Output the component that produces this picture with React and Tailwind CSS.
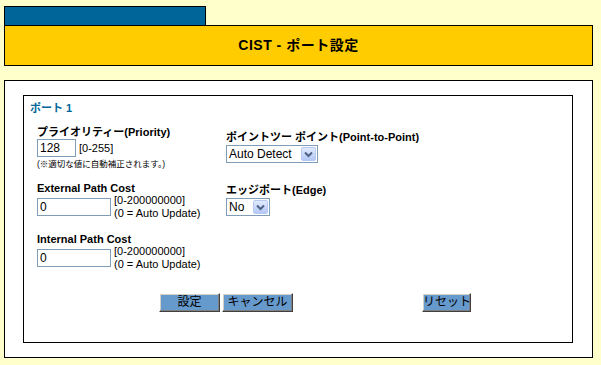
import React from "react";

const font = "font-['Liberation_Sans','Noto_Sans_CJK_JP',sans-serif]";

const TextBox = ({ value, width }) => (
  <div
    className={`h-[18px] border border-[#7f9db9] bg-white px-[2px] text-[12px] leading-[16px] text-black ${width}`}
  >
    {value}
  </div>
);

const SelectBox = ({ value, width }) => (
  <div
    className={`flex h-[18px] items-center justify-between border border-[#7f9db9] bg-white pl-[2px] pr-px ${width}`}
  >
    <span className="text-[12px] leading-[16px] text-black">{value}</span>
    <span className="flex h-[14px] w-[15px] items-center justify-center rounded-[2px] border border-[#b7c9f3] bg-gradient-to-b from-[#e1eafe] to-[#b4c8f6]">
      <svg width="9" height="7" viewBox="0 0 9 7">
        <path d="M1 1.5 L4.5 5 L8 1.5" fill="none" stroke="#4d6185" strokeWidth="2" />
      </svg>
    </span>
  </div>
);

const Button = ({ label, className }) => (
  <button
    className={`h-[19px] whitespace-nowrap border border-t-[#ffffff] border-l-[#ffffff] border-r-[#404040] border-b-[#404040] bg-[#6699cc] p-0 text-[12px] leading-[15px] text-black shadow-[inset_-1px_-1px_0_#808080,inset_1px_1px_0_#d4d0c8] ${className}`}
  >
    {label}
  </button>
);

const Label = ({ children }) => (
  <div className="text-[11px] font-bold leading-[13px] text-black">{children}</div>
);

const RangeNote = ({ range }) => (
  <div className="ml-[3px] text-[11px] leading-[13px] text-black">
    <div>{range}</div>
    <div>(0 = Auto Update)</div>
  </div>
);

export default function App() {
  return (
    <div className={`min-h-screen bg-[#ffffcc] px-[4px] pt-[6px] pr-[8px] ${font}`}>
      <div className="h-[19px] w-[202px] border border-b-0 border-black bg-[#006699]" />
      <div className="flex h-[41px] items-center justify-center border border-black bg-[#ffcc00]">
        <span className="text-[14px] font-bold tracking-[0.5px] text-black">CIST - ポート設定</span>
      </div>

      <div className="mt-[14px] h-[278px] border border-black bg-white pb-[14px] pl-[18px] pr-[19px] pt-[14px]">
        <div className="h-full border border-black pl-[6px] pt-[6px]">
          <div className="text-[11px] font-bold leading-[13px] text-[#006699]">ポート 1</div>

          <div className="mt-[11px] flex pl-[7px]">
            <div className="w-[189px]">
              <Label>プライオリティー(Priority)</Label>
              <div className="flex items-center">
                <TextBox value="128" width="w-[39px]" />
                <span className="ml-[3px] text-[11px] text-black">[0-255]</span>
              </div>
              <div className="mt-px text-[8.5px] leading-[12px] text-black">(※適切な値に自動補正されます。)</div>

              <div className="mt-[12px]">
                <Label>External Path Cost</Label>
              </div>
              <div className="-mt-px flex items-center">
                <TextBox value="0" width="w-[74px]" />
                <RangeNote range="[0-200000000]" />
              </div>

              <div className="mt-[13px]">
                <Label>Internal Path Cost</Label>
              </div>
              <div className="-mt-px flex items-center">
                <TextBox value="0" width="w-[74px]" />
                <RangeNote range="[0-200000000]" />
              </div>
            </div>

            <div className="pt-[5px]">
              <Label>ポイントツー ポイント(Point-to-Point)</Label>
              <div className="mt-px">
                <SelectBox value="Auto Detect" width="w-[92px]" />
              </div>
              <div className="mt-[21px]">
                <Label>エッジポート(Edge)</Label>
              </div>
              <div className="mt-px">
                <SelectBox value="No" width="w-[44px]" />
              </div>
            </div>
          </div>

          <div className="mt-[22px] flex items-start pl-[129px]">
            <Button label="設定" className="w-[61px]" />
            <Button label="キャンセル" className="ml-[2px] w-[71px]" />
            <Button label="リセット" className="ml-[129px] w-[49px]" />
          </div>
        </div>
      </div>
    </div>
  );
}
